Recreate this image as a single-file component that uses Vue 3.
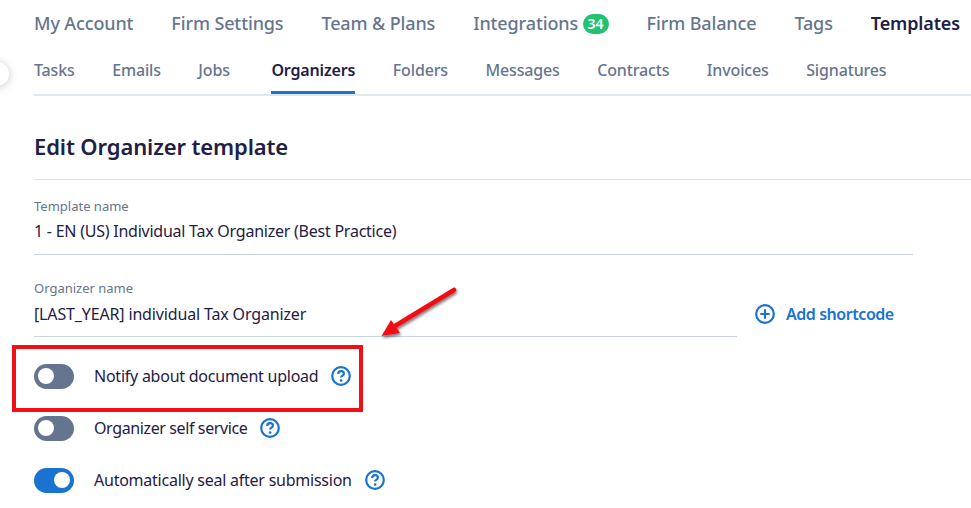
<script setup>
const mainTabs = [
  { label: 'My Account' },
  { label: 'Firm Settings' },
  { label: 'Team & Plans' },
  { label: 'Integrations', badge: 34 },
  { label: 'Firm Balance' },
  { label: 'Tags' },
  { label: 'Templates', active: true },
]
const subTabs = ['Tasks', 'Emails', 'Jobs', 'Organizers', 'Folders', 'Messages', 'Contracts', 'Invoices', 'Signatures']
const toggles = [
  { label: 'Notify about document upload', on: false },
  { label: 'Organizer self service', on: false },
  { label: 'Automatically seal after submission', on: true },
]
</script>

<template>
  <div class="page">
    <span class="collapse"></span>

    <nav class="main-tabs">
      <a v-for="tab in mainTabs" :key="tab.label" :class="{ active: tab.active }">
        {{ tab.label }}
        <span v-if="tab.badge" class="badge">{{ tab.badge }}</span>
      </a>
    </nav>

    <nav class="sub-tabs">
      <a v-for="tab in subTabs" :key="tab" :class="{ active: tab === 'Organizers' }">{{ tab }}</a>
    </nav>

    <h1>Edit Organizer template</h1>

    <div class="form">
      <div class="field">
        <label>Template name</label>
        <div class="value">1 - EN (US) Individual Tax Organizer (Best Practice)</div>
      </div>

      <div class="field-row">
        <div class="field">
          <label>Organizer name</label>
          <div class="value">[LAST_YEAR] individual Tax Organizer</div>
        </div>
        <a class="shortcode">
          <svg width="20" height="20" viewBox="0 0 20 20" fill="none" stroke="#1a73d0" stroke-width="2.2">
            <circle cx="10" cy="10" r="8.8" />
            <path d="M10 5.3v9.4M5.3 10h9.4" />
          </svg>
          Add shortcode
        </a>
      </div>

      <div class="toggles">
        <div v-for="item in toggles" :key="item.label" class="toggle-row">
          <span class="toggle" :class="{ on: item.on }"><i></i></span>
          <span class="toggle-label">{{ item.label }}</span>
          <svg class="help" width="20" height="20" viewBox="0 0 20 20" fill="none">
            <circle cx="10" cy="10" r="8.8" stroke="#1a73d0" stroke-width="2.2" />
            <path d="M7.2 8c0-1.7 1.3-2.8 2.9-2.8s2.8 1.1 2.8 2.5c0 2-2.8 2-2.8 3.9" stroke="#1a73d0" stroke-width="2.2" />
            <circle cx="10.1" cy="14.6" r="1.3" fill="#1a73d0" />
          </svg>
        </div>
      </div>
    </div>

    <div class="callout"></div>
    <svg class="arrow" width="100" height="70" viewBox="0 0 100 70">
      <defs>
        <filter id="arrow-shadow" x="-20%" y="-20%" width="150%" height="150%">
          <feDropShadow dx="1" dy="2" stdDeviation="1.6" flood-color="#000" flood-opacity="0.55" />
        </filter>
      </defs>
      <g filter="url(#arrow-shadow)" fill="#f01015">
        <path d="M73 10 L14 46" stroke="#f01015" stroke-width="4.6" stroke-linecap="round" />
        <path d="M0.5 56 L10 40 L19 53 Z" />
      </g>
    </svg>
  </div>
</template>

<style>
body {
  background: #fff;
}
</style>

<style scoped>
.page {
  position: relative;
  width: 971px;
  height: 508px;
  overflow: hidden;
  box-sizing: border-box;
  padding-left: 34px;
  background: #fff;
  font-family: "Noto Sans", "Open Sans", sans-serif;
  color: #1f2045;
}

.collapse {
  position: absolute;
  left: -15px;
  top: 62px;
  width: 24px;
  height: 24px;
  border-radius: 50%;
  background: #fff;
  box-shadow: 0 1px 8px rgba(60, 70, 100, 0.3);
}

.main-tabs {
  display: flex;
  align-items: center;
  gap: 38px;
  height: 46px;
  white-space: nowrap;
  font-size: 18px;
  font-weight: 500;
  letter-spacing: -0.13px;
  color: #66758f;
}

.main-tabs a.active {
  font-weight: 600;
  color: #1f2045;
}

.badge {
  display: inline-block;
  width: 26px;
  height: 20px;
  border-radius: 10px;
  background: #22c271;
  color: #fff;
  font-size: 14px;
  font-weight: 600;
  line-height: 20px;
  text-align: center;
  letter-spacing: 0;
  vertical-align: 1px;
}

.sub-tabs {
  display: flex;
  gap: 37.5px;
  height: 48px;
  border-bottom: 2px solid #dfe8f1;
  white-space: nowrap;
  font-size: 16px;
  font-weight: 500;
  letter-spacing: -0.15px;
  color: #66758f;
}

.sub-tabs a {
  box-sizing: border-box;
  height: 48px;
  padding-top: 14px;
  line-height: 20px;
}

.sub-tabs a:nth-child(3) {
  margin-right: 4px;
}

.sub-tabs a.active {
  font-weight: 600;
  color: #1f2045;
  border-bottom: 3px solid #1a73d0;
}

h1 {
  margin: 0;
  height: 84px;
  box-sizing: border-box;
  padding-top: 34px;
  border-bottom: 1px solid #d7e0ea;
  font-size: 22px;
  line-height: 32px;
  font-weight: 600;
  letter-spacing: -0.12px;
  color: #1f2045;
}

.form {
  width: 879px;
}

.field {
  height: 75px;
  box-sizing: border-box;
  padding-top: 17px;
  border-bottom: 1px solid #c9d4e3;
}

.field-row {
  display: flex;
  align-items: flex-end;
  height: 82px;
}

.field-row .field {
  height: 65px;
  flex: 0 0 703px;
  padding-top: 7px;
}

label {
  display: block;
  font-size: 13px;
  line-height: 18px;
  color: #66758f;
}

.value {
  margin-top: 4px;
  font-size: 16px;
  line-height: 24px;
  letter-spacing: -0.24px;
  color: #1f2045;
}

.field-row .field .value {
  margin-top: 5px;
  letter-spacing: -0.15px;
}

.shortcode {
  display: flex;
  align-items: center;
  gap: 11px;
  margin-left: 18px;
  margin-bottom: 12px;
  font-size: 16px;
  font-weight: 600;
  letter-spacing: -0.45px;
  color: #1a73d0;
}

.toggles {
  margin-top: 13px;
}

.toggle-row {
  display: flex;
  align-items: center;
  height: 52px;
  font-size: 16px;
  letter-spacing: -0.24px;
}

.toggle-row:nth-child(2) {
  letter-spacing: -0.38px;
}

.toggle {
  position: relative;
  flex: none;
  width: 40px;
  height: 25px;
  margin-right: 20px;
  border-radius: 13px;
  background: #66758f;
}

.toggle i {
  position: absolute;
  left: 4px;
  top: 4.5px;
  width: 16px;
  height: 16px;
  border-radius: 50%;
  background: #fff;
}

.toggle.on {
  background: #1a73d0;
}

.toggle.on i {
  left: 20px;
}

.help {
  margin-left: 13px;
}

.callout {
  position: absolute;
  left: 12px;
  top: 345px;
  width: 351px;
  height: 67px;
  box-sizing: border-box;
  border: 4px solid #f01015;
}

.arrow {
  position: absolute;
  left: 381px;
  top: 280px;
}
</style>
